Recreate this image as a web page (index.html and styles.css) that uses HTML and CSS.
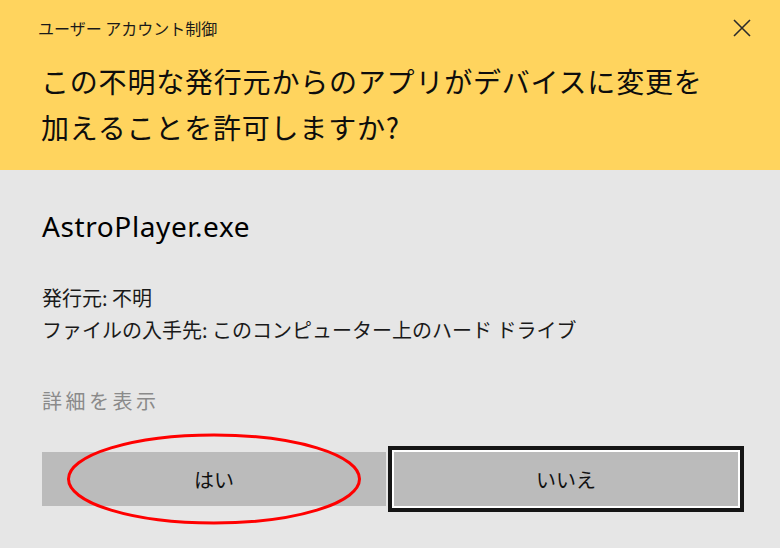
FILE: index.html
```html
<!DOCTYPE html>
<html lang="ja">
<head>
  <meta charset="UTF-8">
  <title>ユーザー アカウント制御</title>
  <link rel="stylesheet" href="styles.css">
</head>
<body>
  <div class="dialog">
    <!-- Yellow warning header -->
    <header class="header">
      <div class="title-bar">
        <span class="title">ユーザー アカウント制御</span>
        <svg class="close" width="18" height="18" viewBox="0 0 18 18">
          <path d="M1 1 L17 17 M17 1 L1 17" stroke="#2b2b2b" stroke-width="1.6" fill="none"/>
        </svg>
      </div>
      <h1 class="question">この不明な発行元からのアプリがデバイスに変更を<br>加えることを許可しますか?</h1>
    </header>

    <!-- Details and buttons -->
    <div class="content">
      <div class="app-name">AstroPlayer.exe</div>
      <div class="details">
        <p>発行元: 不明</p>
        <p>ファイルの入手先: このコンピューター上のハード ドライブ</p>
      </div>
      <div class="more">詳細を表示</div>
      <div class="buttons">
        <button class="btn">はい</button>
        <button class="btn btn-focus">いいえ</button>
      </div>
    </div>

    <svg class="mark" width="300" height="96" viewBox="0 0 300 96">
      <ellipse cx="148" cy="47" rx="145.5" ry="44" stroke="#ff0000" stroke-width="3" fill="none"/>
    </svg>
  </div>
</body>
</html>
```

FILE: styles.css
```css
body {
  margin: 0;
  padding: 0;
  font-family: "Noto Sans CJK JP", "Noto Sans", sans-serif;
  color: #000;
}

.dialog {
  position: relative;
  width: 780px;
  height: 548px;
  background-color: #e6e6e6;
  overflow: hidden;
}

.header {
  background-color: #ffd45e;
  height: 170px;
  box-sizing: border-box;
}

.title-bar {
  display: flex;
  justify-content: space-between;
  align-items: center;
  padding: 18px 29px 0 38px;
  height: 20px;
}

.title {
  font-size: 16px;
  line-height: 20px;
  color: #1a1a1a;
}

.question {
  margin: 20px 0 0 0;
  padding-left: 41px;
  font-size: 28px;
  font-weight: normal;
  line-height: 46px;
  letter-spacing: 0.8px;
  color: #0d0d0d;
}

.content {
  padding: 40px 42px 0 42px;
}

.app-name {
  font-family: "Noto Sans", sans-serif;
  font-size: 28px;
  line-height: 32px;
  letter-spacing: 0.6px;
  color: #000;
}

.details {
  margin-top: 40px;
}

.details p {
  margin: 0;
  font-size: 20px;
  line-height: 32px;
  color: #1a1a1a;
}

.more {
  margin-top: 39px;
  font-size: 20px;
  line-height: 32px;
  letter-spacing: 3.5px;
  color: #8a8a8a;
}

.buttons {
  margin-top: 35px;
  display: grid;
  grid-template-columns: 344px 344px;
  gap: 8px;
}

.btn {
  height: 54px;
  border: none;
  background-color: #bbbbbb;
  font-family: "Noto Sans CJK JP", sans-serif;
  font-size: 20px;
  color: #111;
  padding: 0;
}

.btn-focus {
  box-shadow: 0 0 0 2px #ffffff, 0 0 0 6px #151515;
}

.mark {
  position: absolute;
  left: 66px;
  top: 432px;
}
```
